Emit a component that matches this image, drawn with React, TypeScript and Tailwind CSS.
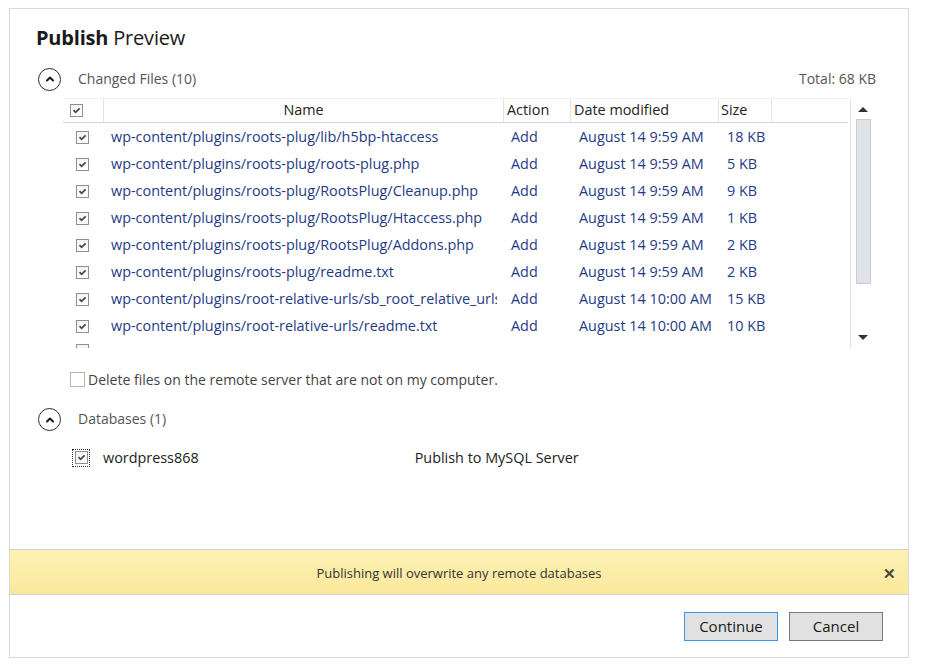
import React from "react";

type FileRow = { name: string; date: string; size: string };

const files: FileRow[] = [
  { name: "wp-content/plugins/roots-plug/lib/h5bp-htaccess", date: "August 14 9:59 AM", size: "18 KB" },
  { name: "wp-content/plugins/roots-plug/roots-plug.php", date: "August 14 9:59 AM", size: "5 KB" },
  { name: "wp-content/plugins/roots-plug/RootsPlug/Cleanup.php", date: "August 14 9:59 AM", size: "9 KB" },
  { name: "wp-content/plugins/roots-plug/RootsPlug/Htaccess.php", date: "August 14 9:59 AM", size: "1 KB" },
  { name: "wp-content/plugins/roots-plug/RootsPlug/Addons.php", date: "August 14 9:59 AM", size: "2 KB" },
  { name: "wp-content/plugins/roots-plug/readme.txt", date: "August 14 9:59 AM", size: "2 KB" },
  { name: "wp-content/plugins/root-relative-urls/sb_root_relative_urls.php", date: "August 14 10:00 AM", size: "15 KB" },
  { name: "wp-content/plugins/root-relative-urls/readme.txt", date: "August 14 10:00 AM", size: "10 KB" },
];

function CheckBox({ checked = true }: { checked?: boolean }) {
  return (
    <span className="inline-flex h-[13px] w-[13px] shrink-0 items-center justify-center border border-[#8e8f8f] bg-[linear-gradient(180deg,#f4f4f4_0%,#ffffff_100%)]">
      {checked && (
        <svg viewBox="0 0 11 11" className="h-[11px] w-[11px]" aria-hidden="true">
          <path d="M2.5 5.2 4.6 7.3 8.6 3.3" fill="none" stroke="#3f4a55" strokeWidth="1.8" />
        </svg>
      )}
    </span>
  );
}

function CollapseButton() {
  return (
    <span className="inline-flex h-[23px] w-[23px] items-center justify-center rounded-full border-[1.5px] border-[#2b2b2b]">
      <svg viewBox="0 0 10 10" className="h-[10px] w-[10px]" aria-hidden="true">
        <path d="M2 6.5 5 3.5 8 6.5" fill="none" stroke="#1a1a1a" strokeWidth="2" strokeLinecap="round" strokeLinejoin="round" />
      </svg>
    </span>
  );
}

export default function App() {
  return (
    <div className="h-[670px] w-[927px] bg-white pl-[9px] pt-[8px] font-['Open_Sans','Noto_Sans',sans-serif]">
      <div className="flex h-[650px] w-[900px] flex-col border border-[#d9d9d9] bg-white">
        <div className="px-[26px] pt-[15px]">
          <h1 className="text-[20px] leading-[28px] tracking-[-0.2px] text-[#1a1a1a]">
            <span className="font-bold">Publish</span> Preview
          </h1>

          <div className="mt-[14px] flex items-center">
            <span className="ml-[2px]">
              <CollapseButton />
            </span>
            <span className="ml-[17px] text-[14px] text-[#555]">Changed Files (10)</span>
            <span className="ml-auto mr-[6px] text-[14px] text-[#555]">Total: 68 KB</span>
          </div>

          <div className="ml-[27px] mt-[7px] flex w-[815px]">
            <div className="w-[785px] text-[14.4px]">
              <div className="grid h-[25px] grid-cols-[40px_400px_67px_148px_53px_77px] border-y border-t-[#f0f0f0] border-b-[#d6d6d6] text-[#222]">
                <div className="flex items-center pl-[7px]">
                  <CheckBox />
                </div>
                <div className="flex items-center justify-center border-l border-[#e3e3e3]">Name</div>
                <div className="flex items-center border-l border-[#e3e3e3] pl-[3px]">Action</div>
                <div className="flex items-center border-l border-[#e3e3e3] pl-[3px]">Date modified</div>
                <div className="flex items-center border-l border-[#e3e3e3] pl-[2px]">Size</div>
                <div className="border-l border-[#e3e3e3]" />
              </div>
              <div className="h-[225px] overflow-hidden pt-[1px]">
                {files.map((f) => (
                  <div key={f.name} className="grid h-[27px] grid-cols-[40px_400px_67px_148px_53px_77px] items-center text-[#1f3a85]">
                    <div className="flex pl-[13px]">
                      <CheckBox />
                    </div>
                    <div className="mr-[6px] overflow-hidden whitespace-nowrap pl-[8px]">{f.name}</div>
                    <div className="pl-[8px]">Add</div>
                    <div className="whitespace-nowrap pl-[9px]">{f.date}</div>
                    <div className="whitespace-nowrap pl-[9px]">{f.size}</div>
                    <div />
                  </div>
                ))}
                <div className="flex pl-[13px] pt-[4px]">
                  <CheckBox checked={false} />
                </div>
              </div>
            </div>
            <div className="ml-[2px] flex h-[250px] w-[25px] flex-col items-center border-l border-[#e3e3e3] pt-[9px]">
              <span className="h-0 w-0 border-x-[5px] border-b-[5px] border-x-transparent border-b-[#333]" />
              <span className="mt-[7px] h-[165px] w-[15px] border border-[#c9cdd1] bg-[#dfe2e6]" />
              <span className="mt-[51px] h-0 w-0 border-x-[5px] border-t-[5px] border-x-transparent border-t-[#333]" />
            </div>
          </div>

          <label className="ml-[34px] mt-[21px] flex items-center text-[14px] text-[#444]">
            <span className="inline-flex h-[15px] w-[15px] border border-[#b5b5b5] bg-white" />
            <span className="ml-[3px]">Delete files on the remote server that are not on my computer.</span>
          </label>

          <div className="mt-[17px] flex items-center">
            <span className="ml-[2px]">
              <CollapseButton />
            </span>
            <span className="ml-[17px] text-[14px] text-[#555]">Databases (1)</span>
          </div>

          <div className="mt-[16px] flex items-center text-[14.4px] text-[#222]">
            <span className="ml-[36px] inline-flex h-[18px] w-[18px] items-center justify-center border border-dotted border-[#333]">
              <CheckBox />
            </span>
            <span className="ml-[13px]">wordpress868</span>
            <span className="ml-[216px]">Publish to MySQL Server</span>
          </div>
        </div>

        <div className="mt-auto">
          <div className="relative flex h-[46px] items-center justify-center border-y border-[#cfcfcf] bg-[linear-gradient(180deg,#fdf1b4_0%,#fbe89c_100%)] pt-[3px] text-[13px] text-[#333]">
            <span>Publishing will overwrite any remote databases</span>
            <span className="absolute right-[12px] top-[14px] text-[15px] font-bold leading-[18px] text-[#444]">✕</span>
          </div>
          <div className="flex h-[62px] items-start justify-end gap-[11px] pr-[25px] pt-[17px]">
            <button type="button" className="h-[29px] w-[94px] border border-[#3a98e6] bg-[#e1e1e1] text-[15px] text-[#1a1a1a]">
              Continue
            </button>
            <button type="button" className="h-[29px] w-[94px] border border-[#7a7a7a] bg-[#e1e1e1] text-[15px] text-[#1a1a1a]">
              Cancel
            </button>
          </div>
        </div>
      </div>
    </div>
  );
}
